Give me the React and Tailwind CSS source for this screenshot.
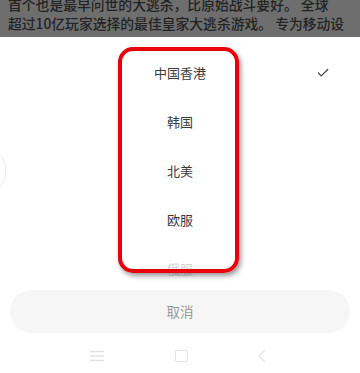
import { Check } from "lucide-react";

const regions = ["中国香港", "韩国", "北美", "欧服"];

const cjk = { fontFamily: '"Noto Sans CJK SC", "Noto Sans", sans-serif' };

export default function App() {
  return (
    <div className="relative h-[373px] w-[360px] overflow-hidden bg-white" style={cjk}>
      {/* dimmed page behind the sheet */}
      <div className="h-[37px] overflow-hidden bg-[#6e6e6e] px-[8px] text-[13.8px] font-medium leading-[19px] text-[#232323]">
        <p className="-mt-[5px] whitespace-nowrap">首个也是最早问世的大逃杀，比原始战斗要好。 全球</p>
        <p className="whitespace-nowrap">超过10亿玩家选择的最佳皇家大逃杀游戏。 专为移动设</p>
      </div>

      {/* picker list */}
      <div className="relative h-[245px] overflow-hidden pt-[11px]">
        {regions.map((name, i) => (
          <div
            key={name}
            className="relative flex h-[49px] items-center justify-center text-[13px] text-[#3a3a3a]"
          >
            {name}
            {i === 0 && (
              <Check size={14} strokeWidth={2.2} className="absolute left-[316px] text-[#444]" />
            )}
          </div>
        ))}
        <div className="flex h-[49px] items-center justify-center text-[13px] text-[#d4d4d4]">
          俄服
        </div>
        <div className="absolute left-[-38px] top-[110px] h-[48px] w-[44px] rounded-full border border-[#ececec]" />
      </div>

      {/* cancel */}
      <div className="mx-[10px] mt-[8px] flex h-[43px] items-center justify-center rounded-full bg-[#f6f6f6] text-[13.5px] text-[#999]">
        取消
      </div>

      {/* nav bar */}
      <div className="mt-[10px] flex h-[26px] items-center justify-between pl-[89px] pr-[93px]">
        <svg width="16" height="12" viewBox="0 0 16 12" fill="none" stroke="#e2e2e2" strokeWidth="1.3">
          <path d="M1 1.5h14M1 6h14M1 10.5h14" />
        </svg>
        <div className="h-[12px] w-[13px] rounded-[2px] border-[1.3px] border-[#e2e2e2]" />
        <svg width="10" height="14" viewBox="0 0 10 14" fill="none" stroke="#e2e2e2" strokeWidth="1.3">
          <path d="M8 1L2 7l6 6" />
        </svg>
      </div>

      {/* red annotation box */}
      <div className="pointer-events-none absolute left-[118px] top-[47px] h-[226px] w-[121px] rounded-[15px] border-[4px] border-[#e8000c] shadow-[2px_3px_5px_rgba(0,0,0,0.4)]" />
    </div>
  );
}
